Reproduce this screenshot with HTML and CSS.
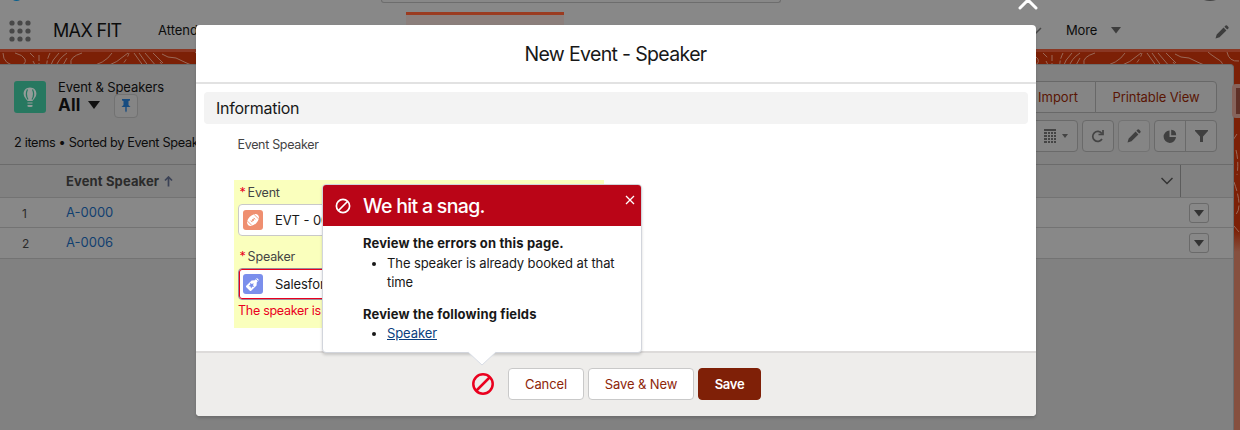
FILE: index.html
```html
<!DOCTYPE html>
<html lang="en">
<head>
<meta charset="utf-8">
<title>New Event - Speaker</title>
<link rel="stylesheet" href="styles.css">
</head>
<body>
<div class="app">
  <div class="topbar">
    <svg class="logo" viewBox="0 0 8 2"><path d="M0 0h7q-3.500 2-7 0" fill="#065f8e"/></svg>
    <div class="search"></div>
    <svg class="avatar" viewBox="0 0 12 2"><path d="M0 0h12q-6 2-12 0" fill="#444"/></svg>
  </div>
  <nav class="nav">
    <svg class="waffle" viewBox="0 0 22 22" fill="#484848"><circle cx="3" cy="3" r="2.600"/><circle cx="11" cy="3" r="2.600"/><circle cx="19" cy="3" r="2.600"/><circle cx="3" cy="11" r="2.600"/><circle cx="11" cy="11" r="2.600"/><circle cx="19" cy="11" r="2.600"/><circle cx="3" cy="19" r="2.600"/><circle cx="11" cy="19" r="2.600"/><circle cx="19" cy="19" r="2.600"/></svg>
    <span class="app-name">MAX FIT</span>
    <span class="nav-item">Attendees</span>
    <span class="tab"></span>
    <svg class="chev" viewBox="0 0 12 8"><path d="M1 1l5 5 5-5" fill="none" stroke="#484848" stroke-width="1.500"/></svg>
    <span class="more">More</span>
    <svg class="more-arrow" viewBox="0 0 10 7"><path d="M0 0h10L5 6.500z" fill="#3d3d3d"/></svg>
    <svg class="nav-pencil" viewBox="0 0 14 14"><path d="M0.500 13.500l1.200-4L8.600 2.600l2.800 2.800-6.900 6.900zM9.400 1.800l1.200-1.200q.7-.6 1.400 0l1.400 1.400q.6.700 0 1.400l-1.200 1.200z" fill="#3d3d3d"/></svg>
  </nav>
  <div class="page">
    <svg class="topo" viewBox="0 0 1240 379" fill="none" stroke="#9a6958" stroke-width="1">
      <defs><g id="contours">
        <path d="M3 1Q3 13 18 14Q27 13 25 7Q23 3 15 1"/>
        <path d="M30 1l5 5M39 3v12M50 1Q46 9 47 15M33 9l3 6" stroke-dasharray="6 2"/>
        <path d="M59 1Q52 8 50 15M67 1Q58 7 56 15M67 6l-5 9"/>
        <path d="M82 1Q69 5 71 12Q72 15 77 15M112 1Q105 12 87 15M128 1Q117 11 105 15"/>
        <path d="M129 1Q127 8 120 15" stroke-dasharray="4 3"/>
        <path d="M134 1l10 14M139 1l10 14M145 1l12 14M153 1l10 10M160 10l4 5"/>
        <path d="M162 2q5 4 14 4q10 5 20 9l10 0q8-3-3-9q-6-4-8-6M214 0q2 10 12 9"/>
      </g></defs>
      <use href="#contours"/>
      <use href="#contours" x="1013"/>
      <path d="M1237 82l-4 6v6M1236 98q3 12 1 25M1234 130q10 28 0 34M1234 174l5 6" stroke-dasharray="9 3"/>
    </svg>
    <main class="panel">
      <div class="list-head">
        <svg class="object-icon" viewBox="0 0 32 32"><rect width="32" height="32" rx="3" fill="#277860"/><path d="M16 6.500c-4 0-6.400 2.800-6.400 6.200 0 3.200 2.500 5.300 4 7.300h4.800c1.500-2 4-4.100 4-7.300 0-3.400-2.400-6.200-6.400-6.200zM13.500 21.500h5v1h-5zM13.500 24h5v1.500q-2.500 1-5 0z" fill="#949c99"/><path d="M13.500 8.500q-2.500 5 .5 10M18.500 8.500q2.500 5-.5 10" fill="none" stroke="#277860" stroke-width="1.200"/></svg>
        <div class="titles">
          <div class="object-name">Event &amp; Speakers</div>
          <div class="view-row"><b class="view">All</b><svg class="view-arrow" viewBox="0 0 12 8"><path d="M0 0h12L6 8z" fill="#111"/></svg><span class="pin"><svg viewBox="0 0 10 15"><path d="M1 1h8v1.500L7.500 3v4L9.500 9H.5l2-2V3L1 2.500zM4.300 9h1.400v4l-.7 1.500-.7-1.500z" fill="#174c80"/></svg></span></div>
        </div>
        <div class="actions"><span class="action import">Import</span><span class="action">Printable View</span></div>
      </div>
      <div class="list-meta">
        <span class="summary">2 items • Sorted by Event Speaker</span>
        <div class="tools">
          <span class="tool display"><svg width="12" height="14" viewBox="0 0 12 14" fill="#444"><path d="M0 0h12v2H0zM0 3h3v2H0zM4 3h2v2H4zM7 3h2v2H7zM10 3h2v2h-2zM0 6h3v2H0zM4 6h2v2H4zM7 6h2v2H7zM10 6h2v2h-2zM0 9h3v2H0zM4 9h2v2H4zM7 9h2v2H7zM10 9h2v2h-2zM0 12h3v2H0zM4 12h2v2H4zM7 12h2v2H7zM10 12h2v2h-2z"/></svg><svg width="6" height="4" viewBox="0 0 6 4"><path d="M0 0h6L3 4z" fill="#444"/></svg></span>
          <span class="tool"><svg width="14" height="14" viewBox="0 0 14 14"><path d="M10.800 4.500A5 5 0 1 0 11 10M12 1v4.500H7.500" fill="none" stroke="#444" stroke-width="1.700"/></svg></span>
          <span class="tool dim"><svg width="14" height="14" viewBox="0 0 14 14"><path d="M0.500 13.500l1.200-4L8.600 2.600l2.800 2.800-6.900 6.900zM9.400 1.800l1.200-1.200q.7-.6 1.400 0l1.400 1.400q.6.700 0 1.400l-1.200 1.200z" fill="#404040"/></svg></span>
          <span class="tool-pair"><span><svg width="14" height="14" viewBox="0 0 14 14" fill="#404040"><path d="M6.500 1.500V8H13A6.200 6.200 0 1 1 6.500 1.500z"/><path d="M8.200 0.800A5.500 5.500 0 0 1 13.200 6.200H8.200z"/></svg></span><span><svg width="13" height="13" viewBox="0 0 13 13"><path d="M0 0h13v1L8 6.500V12H5V6.500L0 1z" fill="#404040"/></svg></span></span>
        </div>
      </div>
      <div class="row head"><span class="num"></span><b class="col">Event Speaker</b><svg class="sort" viewBox="0 0 9 11"><path d="M4.500 10.500V1M1 4.500L4.500 1 8 4.500" fill="none" stroke="#3b4256" stroke-width="1.700"/></svg><svg class="col-chev" viewBox="0 0 12 8"><path d="M.5 1l5.500 5.500L11.500 1" fill="none" stroke="#333" stroke-width="1.500"/></svg><span class="resize"></span></div>
      <div class="row"><span class="num">1</span><span class="link">A-0000</span><span class="menu"><svg viewBox="0 0 10 7"><path d="M0 0h10L5 6.500z" fill="#333"/></svg></span></div>
      <div class="row last"><span class="num">2</span><span class="link">A-0006</span><span class="menu"><svg viewBox="0 0 10 7"><path d="M0 0h10L5 6.500z" fill="#333"/></svg></span></div>
    </main>
    <div class="handle"></div>
  </div>
</div>

<svg class="close" viewBox="0 0 20 20"><path d="M2 2l16 16M18 2L2 18" stroke="#fff" stroke-width="3" stroke-linecap="round"/></svg>
<section class="modal">
  <header class="modal-head">New Event - Speaker</header>
  <div class="modal-body">
    <div class="section-title">Information</div>
    <div class="hint">Event Speaker</div>
    <div class="fields">
      <div class="label"><i>*</i>Event</div>
      <div class="input"><svg viewBox="0 0 20 20"><rect width="20" height="20" rx="3" fill="#ef8f70"/><g transform="rotate(-45 10 10)"><ellipse cx="10" cy="10" rx="7" ry="4.500" fill="#fff"/><path d="M7.500 10h5M8.200 8.700v2.600M10 8.700v2.600M11.800 8.700v2.600M5.300 7v6M14.700 7v6" stroke="#ef8f70" stroke-width=".8"/></g></svg><span class="value">EVT - 0001</span></div>
      <div class="label second"><i>*</i>Speaker</div>
      <div class="input invalid"><svg viewBox="0 0 20 20"><rect width="20" height="20" rx="3" fill="#7b8fec"/><g transform="rotate(45 10 10)"><path d="M8.600 3h2.800v3l2.100 2.500V16q0 1-1 1h-5q-1 0-1-1V8.500L8.600 6z" fill="#fff"/><path d="M8.200 4.300h3.600" stroke="#7b8fec" stroke-width=".8"/><path d="M10 9l.9 1.900 2 .2-1.500 1.400.4 2-1.800-1-1.800 1 .4-2-1.500-1.400 2-.2z" fill="#7b8fec"/></g></svg><span class="value">Salesforce</span></div>
      <div class="error">The speaker is already</div>
    </div>
  </div>
  <footer class="modal-foot">
    <svg class="ban" viewBox="0 0 22 22"><circle cx="11" cy="11" r="9.700" fill="none" stroke="#ea001e" stroke-width="2.500"/><path d="M4.500 17.500l13-13" stroke="#ea001e" stroke-width="2.500"/></svg>
    <button class="btn cancel">Cancel</button><button class="btn save-new">Save &amp; New</button><button class="btn save">Save</button>
  </footer>
</section>
<aside class="popover">
  <div class="pop-head">
    <svg class="pop-ban" viewBox="0 0 16 16"><circle cx="8" cy="8" r="6.600" fill="none" stroke="#fff" stroke-width="1.700"/><path d="M3.500 12.500l9-9" stroke="#fff" stroke-width="1.700"/></svg>
    <span class="pop-title">We hit a snag.</span>
    <svg class="pop-close" viewBox="0 0 10 10"><path d="M1 1l8 8M9 1L1 9" stroke="#fff" stroke-width="1.300"/></svg>
  </div>
  <div class="pop-body">
    <b class="errors">Review the errors on this page.</b>
    <ul><li class="booked">The speaker is already booked at that time</li></ul>
    <b class="following">Review the following fields</b>
    <ul><li><a>Speaker</a></li></ul>
  </div>
  <svg class="nubbin" viewBox="0 0 30 15"><path d="M0 0h30L15 14z" fill="#fff"/><path d="M1 1l14 13L29 1" fill="none" stroke="#d8dde6" stroke-width="1"/></svg>
</aside>
</body>
</html>
```

FILE: styles.css
```css
* { box-sizing: border-box; }
body { margin: 0; width: 1240px; height: 430px; overflow: hidden; position: relative; font: 13px/19px Inter, "Liberation Sans", sans-serif; color: #181818; }
svg { display: block; flex: none; }
.app { height: 430px; background: #888; display: flex; flex-direction: column; color: #0c0c0c; }

.topbar { height: 12px; display: flex; align-items: flex-start; flex: none; }
.logo { width: 8px; height: 2px; margin-left: 13px; }
.search { width: 400px; height: 3px; margin-left: 360px; border: 1px solid #6d6d6d; border-top: 0; border-radius: 0 0 4px 4px; }
.avatar { width: 12px; height: 2px; margin-left: 423px; }
.nav { height: 37px; flex: none; display: flex; align-items: center; }
.waffle { width: 22px; height: 22px; margin-left: 9px; }
.app-name { font-size: 18px; width: 105px; margin-left: 22px; letter-spacing: -.65px; }
.nav-item { width: 248px; }
.tab { width: 158px; height: 37px; border-top: 3px solid #9b3b20; background: #8b7f7c; }
.chev { width: 12px; height: 8px; margin-left: 466px; }
.more { width: 33px; margin-left: 24px; letter-spacing: -.15px; }
.more-arrow { width: 10px; height: 7px; margin-left: 12px; }
.nav-pencil { width: 14px; height: 14px; margin-left: 94px; margin-top: 3px; }

.page { height: 381px; flex: none; position: relative; border-top: 3px solid #8a3723; padding-top: 12px; background: linear-gradient(#7c2006 0 178px, #86503f 200px); }
.topo { position: absolute; left: 0; top: 0; width: 1240px; height: 379px; }
.handle { position: absolute; right: -10px; top: 32px; width: 18px; height: 34px; border: 4px solid rgba(160,135,128,.6); border-radius: 4px; background: #5f3027; }
.panel { position: relative; width: 1234px; height: 366px; background: #818181; border: 1px solid #6d6d6d; border-left: 0; border-bottom: 0; border-radius: 0 4px 0 0; }
.list-head { height: 55px; display: flex; padding: 16px 16px 0 14px; }
.object-icon { width: 32px; height: 32px; }
.titles { margin-left: 12px; }
.object-name { height: 13px; line-height: 13px; letter-spacing: -.1px; }
.view-row { display: flex; align-items: center; height: 20px; }
.view { font-size: 17px; line-height: 20px; width: 30px; letter-spacing: .2px; padding-top: 1px; }
.view-arrow { width: 12px; height: 8px; margin-top: 1px; }
.pin { width: 24px; height: 24px; margin: 3px 0 0 14px; border: 1px solid #727272; border-radius: 4px; background: #858585; display: grid; place-items: center; }
.pin svg { width: 10px; height: 15px; }
.actions { display: flex; height: 32px; margin-left: auto; color: #5a1504; }
.action { width: 122px; border: 1px solid #686868; border-radius: 0 4px 4px 0; background: #858585; line-height: 31px; text-align: center; letter-spacing: -.1px; }
.import { width: 80px; margin-right: -1px; border-radius: 4px 0 0 4px; text-align: right; padding-right: 17px; letter-spacing: 0; }
.list-meta { height: 45px; display: flex; padding: 0 16px 0 14px; border-bottom: 1px solid #6b6b6b; }
.summary { margin-top: 13px; font-size: 12.75px; letter-spacing: -.35px; }
.tools { margin-left: auto; display: flex; gap: 4px; height: 32px; }
.tool, .tool-pair { border: 1px solid #6a6a6a; border-radius: 4px; background: #858585; }
.tool { width: 32px; display: flex; align-items: center; justify-content: center; }
.tool.dim { border-color: #737373; }
.display { width: 56px; justify-content: flex-end; gap: 6px; padding-right: 9px; }
.tool-pair { width: 63px; display: flex; }
.tool-pair span { flex: 1; display: grid; place-items: center; }
.tool-pair span + span { border-left: 1px solid #6a6a6a; }
.row { height: 30px; display: flex; align-items: center; background: #888; border-bottom: 1px solid #737373; }
.row.last { height: 31px; padding-bottom: 1px; }
.row.head { height: 33px; background: #818181; color: #2b2b2b; }
.num { width: 66px; padding-left: 22px; font-size: 12px; color: #2b2b2b; padding-top: 2px; }
.col { width: 98px; letter-spacing: .13px; font-weight: 700; white-space: nowrap; }
.sort { width: 9px; height: 11px; }
.col-chev { width: 12px; height: 8px; margin-left: auto; }
.resize { width: 53px; height: 32px; margin-left: 7px; border-left: 1px solid #5c5c5c; }
.link { color: #113f70; }
.menu { width: 20px; height: 20px; margin: 1px 24px 0 auto; border: 1px solid #6a6a6a; border-radius: 3px; display: grid; place-items: center; }
.menu svg { width: 10px; height: 7px; }

.close { position: absolute; left: 1018px; top: -10px; width: 20px; height: 20px; }
.modal { position: absolute; left: 196px; top: 25px; width: 840px; height: 391px; background: #fff; border-radius: 4px; box-shadow: 0 2px 3px rgba(0,0,0,.16); overflow: hidden; display: flex; flex-direction: column; }
.modal-head { height: 59px; border-bottom: 2px solid #e2e2e2; text-align: center; font-size: 19.5px; line-height: 59px; letter-spacing: -.66px; padding-right: 1px; flex: none; }
.modal-body { height: 267px; padding: 8px; flex: none; }
.section-title { height: 32px; border-radius: 4px; background: #f3f3f3; font-size: 16px; line-height: 32px; padding-left: 12px; letter-spacing: -.27px; }
.hint { margin: 11px 0 26px 33.500px; color: #444; font-size: 12.5px; letter-spacing: -.32px; }
.fields { margin-left: 30px; width: 370px; height: 148px; background: #faffbd; padding: 3px 5px 0 4px; }
.label { height: 21px; color: #444; font-size: 12.5px; letter-spacing: -.18px; padding-left: 1.500px; }
.label i { color: #ea001e; font-style: normal; margin-right: 2px; }
.label.second { margin-top: 11px; }
.input { height: 32px; border: 1px solid #c9c9c9; border-radius: 4px; background: #fff; display: flex; align-items: center; padding-left: 4px; }
.input svg { width: 20px; height: 20px; }
.value { margin-left: 12px; letter-spacing: -.08px; }
.input.invalid { border: 1px solid #9b8b9b; box-shadow: inset 0 0 0 1px #ea001e; }
.error { color: #ea001e; line-height: 19px; margin-top: 1px; font-size: 12.5px; letter-spacing: -.28px; }
.modal-foot { height: 65px; background: #eeedeb; border-top: 2px solid #dddbda; display: flex; align-items: center; padding: 0 0 2px 276px; }
.ban { width: 22px; height: 22px; margin-right: 14px; }
.btn { height: 32px; padding: 0; border: 1px solid #c9c9c9; border-radius: 4px; background: #fff; color: #8e2609; font: 13px/30px Inter, sans-serif; margin-right: 4px; letter-spacing: -.1px; }
.cancel { width: 76px; }
.save-new { width: 106px; }
.save { width: 63px; background: #7f2007; border-color: #7f2007; color: #fff; font-weight: 600; letter-spacing: -.3px; }

.popover { position: absolute; left: 322px; top: 184px; width: 320px; height: 169px; background: #fff; border: 1px solid #d2d5dc; border-radius: 4px; box-shadow: 0 2px 3px rgba(0,0,0,.16); }
.pop-head { height: 41px; background: #ba0517; color: #fff; border-radius: 3px 3px 0 0; display: flex; align-items: center; }
.pop-title { font-size: 19.5px; font-weight: 500; letter-spacing: -.68px; padding-top: 1px; }
.pop-ban { width: 16px; height: 16px; margin: 1px 12px 0 12px; }
.pop-close { width: 10px; height: 10px; margin: -12px 6px 0 auto; }
.pop-body { padding: 8px 15px 0 40px; line-height: 19.500px; }
.pop-body b { display: block; font-weight: 700; letter-spacing: .14px; }
.pop-body ul { margin: 0 0 12px; padding-left: 24px; letter-spacing: -.1px; }
.pop-body a { color: #0b3e7e; text-decoration: underline; }
.nubbin { position: absolute; left: 144px; top: 166px; width: 30px; height: 15px; }
```
